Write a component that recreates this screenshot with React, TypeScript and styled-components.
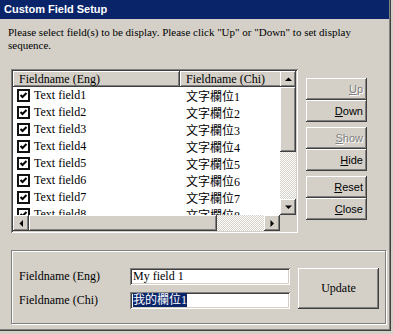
import React from 'react';
import styled, { createGlobalStyle, css } from 'styled-components';

const GlobalStyle = createGlobalStyle`
  html, body { margin: 0; padding: 0; background: #d4d0c8; }
  body { font-family: "Liberation Serif", "Noto Sans CJK TC", serif; }
  * { box-sizing: border-box; }
`;

const raised = css`
  background: #d4d0c8;
  box-shadow: inset -1px -1px #404040, inset 1px 1px #ffffff, inset -2px -2px #808080, inset 2px 2px #d4d0c8;
`;

const sunken = css`
  box-shadow: inset 1px 1px #808080, inset -1px -1px #ffffff, inset 2px 2px #404040, inset -2px -2px #d4d0c8;
`;

const checker = css`
  background: repeating-conic-gradient(#d4d0c8 0% 25%, #ffffff 0% 50%) 0 0 / 2px 2px;
`;

const Window = styled.div`
  width: 391px;
  height: 331px;
  background: #d4d0c8;
  display: flex;
  flex-direction: column;
  padding: 0 2px 2px 0;
  box-shadow: inset -1px -1px #404040, inset -2px -2px #808080;
`;

const TitleBar = styled.div`
  height: 19px;
  background: #0a246a;
  color: #ffffff;
  font-family: "Liberation Sans", Arial, sans-serif;
  font-weight: bold;
  font-size: 11px;
  line-height: 19px;
  padding-left: 4px;
`;

const Instructions = styled.p`
  margin: 0;
  padding: 7px 8px 0;
  font-size: 11px;
  line-height: 13px;
  color: #000;
  white-space: nowrap;
`;

const MainRow = styled.div`
  display: flex;
  align-items: flex-start;
  margin-top: 17px;
  padding-left: 11px;
`;

const ListBox = styled.div`
  ${sunken};
  background: #ffffff;
  width: 287px;
  height: 164px;
  padding: 2px;
  display: grid;
  grid-template-columns: 267px 16px;
  grid-template-rows: 144px 16px;
`;

const Viewport = styled.div`
  overflow: hidden;
  background: #ffffff;
`;

const HeaderRow = styled.div`
  display: flex;
  height: 16px;
  width: 300px;
`;

const HeaderCell = styled.div<{ $w: number }>`
  ${raised};
  width: ${p => p.$w}px;
  flex: none;
  height: 16px;
  font-size: 12px;
  line-height: 16px;
  padding-left: 6px;
  white-space: nowrap;
`;

const Row = styled.div`
  display: flex;
  height: 17px;
  align-items: center;
  font-size: 12px;
  white-space: nowrap;
`;

const NameCell = styled.div`
  width: 167px;
  flex: none;
  display: flex;
  align-items: center;
  gap: 4px;
  padding-left: 4px;
`;

const ChiCell = styled.div`
  padding-left: 6px;
`;

const VScroll = styled.div`
  display: flex;
  flex-direction: column;
`;

const HScroll = styled.div`
  display: flex;
`;

const ArrowButton = styled.div`
  ${raised};
  width: 16px;
  height: 16px;
  flex: none;
  display: flex;
  align-items: center;
  justify-content: center;
`;

const Thumb = styled.div<{ $w?: number; $h?: number }>`
  ${raised};
  flex: none;
  width: ${p => (p.$w ? `${p.$w}px` : '16px')};
  height: ${p => (p.$h ? `${p.$h}px` : '16px')};
`;

const Track = styled.div`
  ${checker};
  flex: 1;
`;

const Corner = styled.div`
  background: #d4d0c8;
`;

const ButtonColumn = styled.div`
  margin-left: 8px;
  padding-top: 9px;
  display: flex;
  flex-direction: column;
  gap: 5px;
`;

const ButtonPair = styled.div`
  display: flex;
  flex-direction: column;
`;

const SideButton = styled.div<{ $disabled?: boolean }>`
  ${raised};
  width: 61px;
  height: 22px;
  font-family: "Liberation Sans", Arial, sans-serif;
  font-size: 11px;
  line-height: 22px;
  text-align: right;
  padding-right: 4px;
  color: ${p => (p.$disabled ? '#808080' : '#000000')};
  text-shadow: ${p => (p.$disabled ? '1px 1px #ffffff' : 'none')};
  u { text-decoration: underline; }
`;

const GroupBox = styled.div`
  margin: 17px 0 0 11px;
  width: 375px;
  height: 74px;
  border: 1px solid #808080;
  box-shadow: inset 1px 1px #ffffff, 1px 1px #ffffff;
  padding: 17px 6px 0 6px;
  display: grid;
  grid-template-columns: 112px 160px 81px;
  grid-template-rows: 17px 17px;
  column-gap: 0;
  row-gap: 7px;
`;

const FieldLabel = styled.div`
  font-size: 12px;
  line-height: 17px;
  padding-left: 1px;
  white-space: nowrap;
`;

const TextInput = styled.div`
  ${sunken};
  background: #ffffff;
  height: 17px;
  font-size: 12px;
  line-height: 17px;
  padding-left: 3px;
  white-space: nowrap;
  overflow: hidden;
`;

const Selected = styled.span`
  background: #0a246a;
  color: #ffffff;
`;

const UpdateButton = styled.div`
  ${raised};
  grid-column: 3;
  grid-row: 1 / span 2;
  margin-left: 8px;
  width: 81px;
  height: 41px;
  font-size: 12px;
  display: flex;
  align-items: center;
  justify-content: center;
`;

const CheckIcon = () => (
  <svg width="13" height="13" viewBox="0 0 13 13">
    <rect x="0" y="0" width="13" height="13" fill="#111" />
    <rect x="2" y="2" width="9" height="9" fill="#fff" />
    <path d="M3.5 6 L5.5 8 L9.5 4" fill="none" stroke="#000" strokeWidth="2" />
  </svg>
);

const Arrow = ({ dir }: { dir: 'up' | 'down' | 'left' | 'right' }) => {
  const pts = {
    up: '0,4 7,4 3.5,0.5',
    down: '0,0.5 7,0.5 3.5,4',
    left: '4,0 4,7 0.5,3.5',
    right: '0.5,0 0.5,7 4,3.5',
  }[dir];
  const horiz = dir === 'left' || dir === 'right';
  return (
    <svg width={horiz ? 5 : 7} height={horiz ? 7 : 5} viewBox={horiz ? '0 0 5 7' : '0 0 7 5'}>
      <polygon points={pts} fill="#000" />
    </svg>
  );
};

const rows = [1, 2, 3, 4, 5, 6, 7, 8];

export default function App() {
  return (
    <>
      <GlobalStyle />
      <Window>
        <TitleBar>Custom Field Setup</TitleBar>
        <Instructions>
          Please select field(s) to be display. Please click "Up" or "Down" to set display
          <br />
          sequence.
        </Instructions>
        <MainRow>
          <ListBox>
            <Viewport>
              <HeaderRow>
                <HeaderCell $w={167}>Fieldname (Eng)</HeaderCell>
                <HeaderCell $w={133}>Fieldname (Chi)</HeaderCell>
              </HeaderRow>
              {rows.map(n => (
                <Row key={n}>
                  <NameCell>
                    <CheckIcon />
                    <span>Text field{n}</span>
                  </NameCell>
                  <ChiCell>文字欄位{n}</ChiCell>
                </Row>
              ))}
            </Viewport>
            <VScroll>
              <ArrowButton><Arrow dir="up" /></ArrowButton>
              <Thumb $h={65} />
              <Track />
              <ArrowButton><Arrow dir="down" /></ArrowButton>
            </VScroll>
            <HScroll>
              <ArrowButton><Arrow dir="left" /></ArrowButton>
              <Thumb $w={188} />
              <Track />
              <ArrowButton><Arrow dir="right" /></ArrowButton>
            </HScroll>
            <Corner />
          </ListBox>
          <ButtonColumn>
            <ButtonPair>
              <SideButton $disabled><u>U</u>p</SideButton>
              <SideButton><u>D</u>own</SideButton>
            </ButtonPair>
            <ButtonPair>
              <SideButton $disabled><u>S</u>how</SideButton>
              <SideButton><u>H</u>ide</SideButton>
            </ButtonPair>
            <ButtonPair>
              <SideButton><u>R</u>eset</SideButton>
              <SideButton><u>C</u>lose</SideButton>
            </ButtonPair>
          </ButtonColumn>
        </MainRow>
        <GroupBox>
          <FieldLabel>Fieldname (Eng)</FieldLabel>
          <TextInput>My field 1</TextInput>
          <UpdateButton>Update</UpdateButton>
          <FieldLabel>Fieldname (Chi)</FieldLabel>
          <TextInput><Selected>我的欄位1</Selected></TextInput>
        </GroupBox>
      </Window>
    </>
  );
}
